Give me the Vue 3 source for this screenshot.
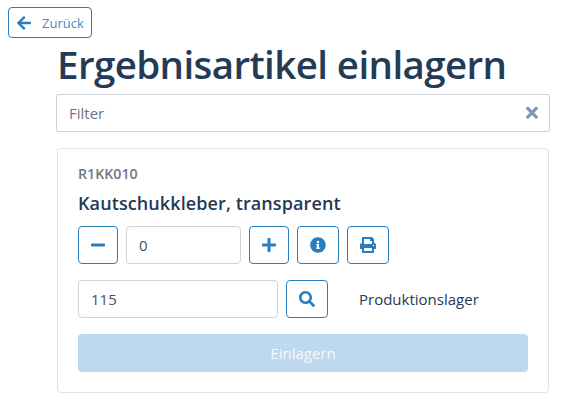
<script setup>
const icons = {
  left: { w: 448, d: 'M257.5 445.1l-22.2 22.2c-9.4 9.4-24.6 9.4-33.9 0L7 273c-9.4-9.4-9.4-24.6 0-33.9L201.4 44.7c9.4-9.4 24.6-9.4 33.9 0l22.2 22.2c9.5 9.5 9.3 25-.4 34.3L136.6 216H424c13.3 0 24 10.7 24 24v32c0 13.3-10.7 24-24 24H136.6l120.5 114.8c9.8 9.3 10 24.8.4 34.3z' },
  times: { w: 352, d: 'M242.72 256l100.07-100.07c12.28-12.28 12.28-32.19 0-44.48l-22.24-22.24c-12.28-12.28-32.19-12.28-44.48 0L176 189.28 75.93 89.21c-12.28-12.28-32.19-12.28-44.48 0L9.21 111.45c-12.28 12.28-12.28 32.19 0 44.48L109.28 256 9.21 356.07c-12.28 12.28-12.28 32.19 0 44.48l22.24 22.24c12.28 12.28 32.2 12.28 44.48 0L176 322.72l100.07 100.07c12.28 12.28 32.2 12.28 44.48 0l22.24-22.24c12.28-12.28 12.28-32.19 0-44.48L242.72 256z' },
  minus: { w: 448, d: 'M416 208H32c-17.67 0-32 14.33-32 32v32c0 17.67 14.33 32 32 32h384c17.67 0 32-14.33 32-32v-32c0-17.67-14.33-32-32-32z' },
  plus: { w: 448, d: 'M416 208H272V64c0-17.67-14.33-32-32-32h-32c-17.67 0-32 14.33-32 32v144H32c-17.67 0-32 14.33-32 32v32c0 17.67 14.33 32 32 32h144v144c0 17.67 14.33 32 32 32h32c17.67 0 32-14.33 32-32V304h144c17.67 0 32-14.33 32-32v-32c0-17.67-14.33-32-32-32z' },
  info: { w: 512, d: 'M256 8C119.043 8 8 119.083 8 256c0 136.997 111.043 248 248 248s248-111.003 248-248C504 119.083 392.957 8 256 8zm0 110c23.196 0 42 18.804 42 42s-18.804 42-42 42-42-18.804-42-42 18.804-42 42-42zm56 254c0 6.627-5.373 12-12 12h-88c-6.627 0-12-5.373-12-12v-24c0-6.627 5.373-12 12-12h12v-64h-12c-6.627 0-12-5.373-12-12v-24c0-6.627 5.373-12 12-12h64c6.627 0 12 5.373 12 12v100h12c6.627 0 12 5.373 12 12v24z' },
  print: { w: 512, d: 'M448 192V77.25c0-8.49-3.37-16.62-9.37-22.63L393.37 9.37c-6-6-14.14-9.37-22.63-9.37H96C78.33 0 64 14.33 64 32v160c-35.35 0-64 28.65-64 64v112c0 8.84 7.16 16 16 16h48v96c0 17.67 14.33 32 32 32h320c17.67 0 32-14.33 32-32v-96h48c8.84 0 16-7.16 16-16V256c0-35.35-28.65-64-64-64zm-64 256H128v-96h256v96zm0-224H128V64h192v48c0 8.84 7.16 16 16 16h48v96zm48 72c-13.25 0-24-10.75-24-24 0-13.26 10.75-24 24-24s24 10.74 24 24c0 13.25-10.75 24-24 24z' },
  search: { w: 512, d: 'M505 442.7L405.3 343c-4.5-4.5-10.6-7-17-7H372c27.6-35.3 44-79.7 44-128C416 93.1 322.9 0 208 0S0 93.1 0 208s93.1 208 208 208c48.3 0 92.7-16.4 128-44v16.3c0 6.4 2.5 12.5 7 17l99.7 99.7c9.4 9.4 24.6 9.4 33.9 0l28.3-28.3c9.4-9.4 9.4-24.6.1-34zM208 336c-70.7 0-128-57.2-128-128 0-70.7 57.2-128 128-128 70.7 0 128 57.2 128 128 0 70.7-57.2 128-128 128z' }
}
</script>

<template>
  <div class="page">
    <button class="btn back" type="button">
      <svg class="ico" :viewBox="`0 0 ${icons.left.w} 512`"><path :d="icons.left.d" /></svg>
      <span>Zurück</span>
    </button>
    <main class="content">
      <h1>Ergebnisartikel einlagern</h1>
      <div class="filter">
        <input class="field" placeholder="Filter" />
        <svg class="clear" :viewBox="`0 0 ${icons.times.w} 512`"><path :d="icons.times.d" /></svg>
      </div>
      <section class="card">
        <div class="code">R1KK010</div>
        <div class="name">Kautschukkleber, transparent</div>
        <div class="row qty">
          <button class="btn sq w40" type="button"><svg class="ico" :viewBox="`0 0 ${icons.minus.w} 512`"><path :d="icons.minus.d" /></svg></button>
          <input class="field amount" value="0" />
          <button class="btn sq w40" type="button"><svg class="ico" :viewBox="`0 0 ${icons.plus.w} 512`"><path :d="icons.plus.d" /></svg></button>
          <button class="btn sq w42" type="button"><svg class="ico" viewBox="0 0 512 512"><path :d="icons.info.d" /></svg></button>
          <button class="btn sq w42" type="button"><svg class="ico" viewBox="0 0 512 512"><path :d="icons.print.d" /></svg></button>
        </div>
        <div class="row loc">
          <input class="field place" value="115" />
          <button class="btn sq w42" type="button"><svg class="ico" viewBox="0 0 512 512"><path :d="icons.search.d" /></svg></button>
          <span class="store">Produktionslager</span>
        </div>
        <button class="submit" type="button" disabled>Einlagern</button>
      </section>
    </main>
  </div>
</template>

<style>
html, body { margin: 0; background: #fff; }
</style>

<style scoped>
.page {
  height: 406px;
  overflow: hidden;
  box-sizing: border-box;
  padding: 7px 11px 0 8px;
  font-family: "Open Sans", "Noto Sans", sans-serif;
  font-size: 15px;
  color: #1f3a56;
}
.btn {
  box-sizing: border-box;
  display: flex;
  align-items: center;
  justify-content: center;
  height: 38px;
  padding: 0;
  background: #fff;
  border: 1px solid #2a7dbd;
  border-radius: 4px;
  color: #2a7dbd;
  font: inherit;
}
.ico { width: 16px; height: 16px; fill: currentColor; display: block; }
.back {
  justify-content: flex-start;
  width: 84px;
  height: 31px;
  padding-left: 7px;
  gap: 10px;
  font-size: 13px;
}
.back span { color: #3f8bc6; }
.content { margin-left: 48px; }
h1 {
  margin: 1px 0 0 1px;
  font-size: 38.5px;
  line-height: 51px;
  font-weight: 600;
  letter-spacing: -0.6px;
  color: #233b57;
  white-space: nowrap;
}
.filter { position: relative; margin-top: 4px; }
.field {
  box-sizing: border-box;
  display: block;
  height: 38px;
  padding: 0 12px;
  border: 1px solid #ced4da;
  border-radius: 4px;
  background: #fff;
  color: #495057;
  font: inherit;
  outline: none;
}
.field::placeholder { color: #6c757d; opacity: 1; }
.filter .field { width: 100%; border-radius: 2px; }
.clear {
  position: absolute;
  right: 12px;
  top: 10px;
  width: 12px;
  height: 17.5px;
  fill: #7f98b2;
}
.card {
  box-sizing: border-box;
  margin: 16px 1px 0;
  height: 245px;
  padding: 14px 20px 20px;
  border: 1px solid #dfe1e5;
  border-radius: 4px;
}
.code { font-size: 14.2px; line-height: 22px; font-weight: 600; color: #6f7780; }
.name { margin-top: 6px; font-size: 18px; line-height: 24px; font-weight: 600; letter-spacing: 0.1px; color: #1f3a56; }
.row { display: flex; align-items: center; gap: 8px; }
.qty { margin-top: 11px; }
.loc { margin-top: 16px; }
.w40 { width: 40px; }
.w42 { width: 42px; }
.amount { width: 115px; }
.place { width: 200px; }
.store { margin-left: 23px; font-size: 15px; color: #1f3a56; }
.submit {
  display: block;
  box-sizing: border-box;
  width: 100%;
  height: 38px;
  margin-top: 16px;
  border: 0;
  border-radius: 4px;
  background: #bed8ee;
  color: #f4f8fc;
  font: inherit;
  font-weight: 500;
}
</style>
